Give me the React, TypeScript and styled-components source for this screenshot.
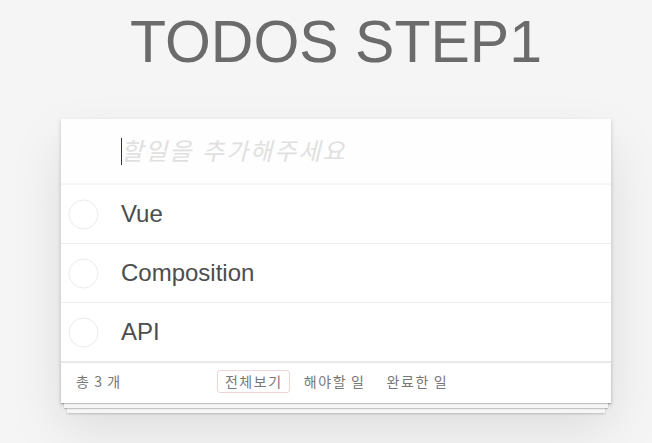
import React from "react";
import styled, { createGlobalStyle } from "styled-components";

const GlobalStyle = createGlobalStyle`
  html, body {
    margin: 0;
    padding: 0;
  }
  body {
    background: #f5f5f5;
    color: #4d4d4d;
    font: 14px "Liberation Sans", Arial, "Noto Sans CJK KR", sans-serif;
    line-height: 1.4em;
    -webkit-font-smoothing: antialiased;
  }
`;

const Page = styled.div`
  width: 550px;
  margin: 0 0 40px 61px;
  padding-top: 8px;
`;

const Title = styled.h1`
  margin: 0;
  font-size: 59px;
  line-height: 69px;
  font-weight: 400;
  text-align: center;
  color: #6b6b6b;
`;

const App = styled.section`
  margin-top: 42px;
  background: #fff;
  position: relative;
  box-shadow: 0 2px 4px 0 rgba(0, 0, 0, 0.2), 0 25px 50px 0 rgba(0, 0, 0, 0.1);
`;

const Header = styled.header`
  position: relative;
`;

const NewTodo = styled.input`
  display: block;
  box-sizing: border-box;
  width: 100%;
  height: 66px;
  margin: 0;
  padding: 16px 16px 16px 60px;
  border: none;
  outline: none;
  background: rgba(0, 0, 0, 0.003);
  box-shadow: inset 0 -2px 1px rgba(0, 0, 0, 0.03);
  font-family: "Liberation Sans", Arial, "Noto Sans CJK KR", sans-serif;
  font-size: 24px;
  color: #4d4d4d;
  caret-color: transparent;

  &::placeholder {
    font-style: italic;
    color: #e0e0e0;
    letter-spacing: 2px;
  }
`;

const Caret = styled.span`
  position: absolute;
  left: 60px;
  top: 19px;
  width: 1px;
  height: 27px;
  background: #333;
  pointer-events: none;
`;

const List = styled.ul`
  margin: 0;
  padding: 0;
  list-style: none;
`;

const Item = styled.li`
  display: flex;
  align-items: center;
  border-bottom: 1px solid #ededed;
  font-size: 24px;
`;

const ToggleCell = styled.span`
  width: 45px;
  flex: none;
  display: flex;
  justify-content: center;
`;

const Label = styled.label`
  flex: 1;
  padding: 15px;
  line-height: 28px;
  color: #4d4d4d;
  font-family: "Liberation Sans", Arial, sans-serif;
`;

const Footer = styled.footer`
  display: grid;
  grid-template-columns: 1fr auto 1fr;
  grid-template-rows: 20px;
  align-items: center;
  height: 20px;
  padding: 8px 15px 12px;
  border-top: 1px solid #e6e6e6;
  color: #777;
  font-family: "Noto Sans CJK KR", "Liberation Sans", sans-serif;
  font-size: 14px;
  letter-spacing: 1.6px;
  box-shadow: 0 1px 1px rgba(0, 0, 0, 0.2), 0 8px 0 -3px #f6f6f6,
    0 9px 1px -3px rgba(0, 0, 0, 0.2), 0 16px 0 -6px #f6f6f6,
    0 17px 2px -6px rgba(0, 0, 0, 0.2);
`;

const Count = styled.span`
  justify-self: start;
  line-height: 20px;
  word-spacing: -1px;
`;

const Filters = styled.ul`
  display: flex;
  margin: 0;
  padding: 0;
  list-style: none;
`;

const FilterLink = styled.a<{ $selected?: boolean }>`
  display: block;
  margin: 0 3px;
  padding: 3px 6px 3px 7px;
  border: 1px solid ${(p) => (p.$selected ? "rgba(175, 47, 47, 0.2)" : "transparent")};
  border-radius: 3px;
  color: inherit;
  text-decoration: none;
  line-height: 15px;
  word-spacing: -1px;
`;

const Circle = () => (
  <svg width="31" height="31" viewBox="0 0 31 31">
    <circle cx="15.5" cy="15.5" r="14.5" fill="none" stroke="#ebebeb" strokeWidth="1" />
  </svg>
);

const todos = ["Vue", "Composition", "API"];

export default function AppRoot() {
  return (
    <>
      <GlobalStyle />
      <Page>
        <Title>TODOS STEP1</Title>
        <App>
          <Header>
            <NewTodo placeholder="할일을 추가해주세요" />
            <Caret />
          </Header>
          <List>
            {todos.map((t) => (
              <Item key={t}>
                <ToggleCell>
                  <Circle />
                </ToggleCell>
                <Label>{t}</Label>
              </Item>
            ))}
          </List>
          <Footer>
            <Count>총 3 개</Count>
            <Filters>
              <li>
                <FilterLink $selected>전체보기</FilterLink>
              </li>
              <li>
                <FilterLink>해야할 일</FilterLink>
              </li>
              <li>
                <FilterLink>완료한 일</FilterLink>
              </li>
            </Filters>
            <span />
          </Footer>
        </App>
      </Page>
    </>
  );
}
